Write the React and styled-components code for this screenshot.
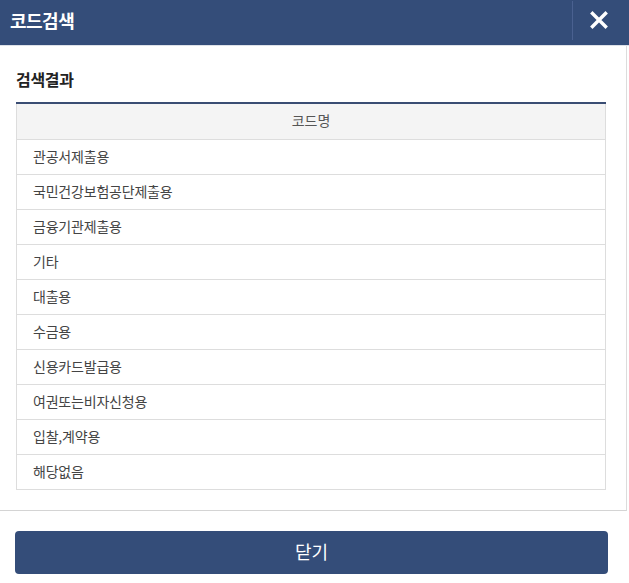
import React from "react";
import styled, { createGlobalStyle } from "styled-components";

const Global = createGlobalStyle`
  html, body { margin: 0; padding: 0; background: #fff; }
  body { font-family: "Noto Sans CJK KR", "Noto Sans", sans-serif; color: #333; }
`;

const Page = styled.div`
  width: 629px;
  height: 583px;
  display: flex;
  flex-direction: column;
  background: #fff;
`;

const Header = styled.header`
  height: 46px;
  background: #344d79;
  display: flex;
  align-items: stretch;
  border-bottom: 1px solid #dde1e8;
  box-sizing: border-box;
  flex-shrink: 0;
`;

const Title = styled.h1`
  flex: 1;
  margin: 0;
  padding: 0 0 6px 10px;
  display: flex;
  align-items: center;
  color: #fff;
  font-size: 18px;
  font-weight: 700;
  letter-spacing: -0.5px;
`;

const CloseIcon = styled.button`
  width: 57px;
  margin: 1px 0 5px;
  border: none;
  border-left: 1px solid #4a6190;
  background: transparent;
  display: flex;
  align-items: center;
  justify-content: center;
  padding: 0 4px 2px 0;
  cursor: pointer;
`;

const Panel = styled.section`
  width: 627px;
  height: 465px;
  box-sizing: border-box;
  border-right: 1px solid #dcdcdc;
  border-bottom: 1px solid #d4d4d4;
  padding: 20px 20px 0 16px;
  flex-shrink: 0;
`;

const SectionTitle = styled.h2`
  margin: 0 0 10px;
  font-size: 16px;
  font-weight: 700;
  color: #222;
  line-height: 26px;
  letter-spacing: -0.3px;
`;

const Table = styled.table`
  width: 590px;
  border-collapse: collapse;
  border-top: 2px solid #3a4d73;
  font-size: 14px;
`;

const Th = styled.th`
  height: 36px;
  background: #f4f4f4;
  border: 1px solid #dddddd;
  border-top: none;
  font-weight: 400;
  color: #555;
  text-align: center;
  padding: 0 0 2px;
  box-sizing: border-box;
`;

const Td = styled.td`
  height: 35px;
  border: 1px solid #dddddd;
  padding: 0 0 2px 16px;
  color: #444;
  box-sizing: border-box;
  letter-spacing: -0.2px;
`;

const Footer = styled.div`
  padding: 20px 21px 0 15px;
`;

const CloseButton = styled.button`
  width: 593px;
  height: 43px;
  background: #344d79;
  border: none;
  border-radius: 4px;
  color: #fff;
  font-family: inherit;
  font-size: 18px;
  padding: 0 0 3px;
  cursor: pointer;
`;

const rows = [
  "관공서제출용",
  "국민건강보험공단제출용",
  "금융기관제출용",
  "기타",
  "대출용",
  "수금용",
  "신용카드발급용",
  "여권또는비자신청용",
  "입찰,계약용",
  "해당없음",
];

export default function App() {
  return (
    <Page>
      <Global />
      <Header>
        <Title>코드검색</Title>
        <CloseIcon aria-label="닫기">
          <svg width="18" height="18" viewBox="0 0 18 18">
            <path d="M2.5 2.5 L15.5 15.5 M15.5 2.5 L2.5 15.5" stroke="#fff" strokeWidth="3.4" strokeLinecap="square" />
          </svg>
        </CloseIcon>
      </Header>
      <Panel>
        <SectionTitle>검색결과</SectionTitle>
        <Table>
          <thead>
            <tr>
              <Th>코드명</Th>
            </tr>
          </thead>
          <tbody>
            {rows.map((r) => (
              <tr key={r}>
                <Td>{r}</Td>
              </tr>
            ))}
          </tbody>
        </Table>
      </Panel>
      <Footer>
        <CloseButton>닫기</CloseButton>
      </Footer>
    </Page>
  );
}
